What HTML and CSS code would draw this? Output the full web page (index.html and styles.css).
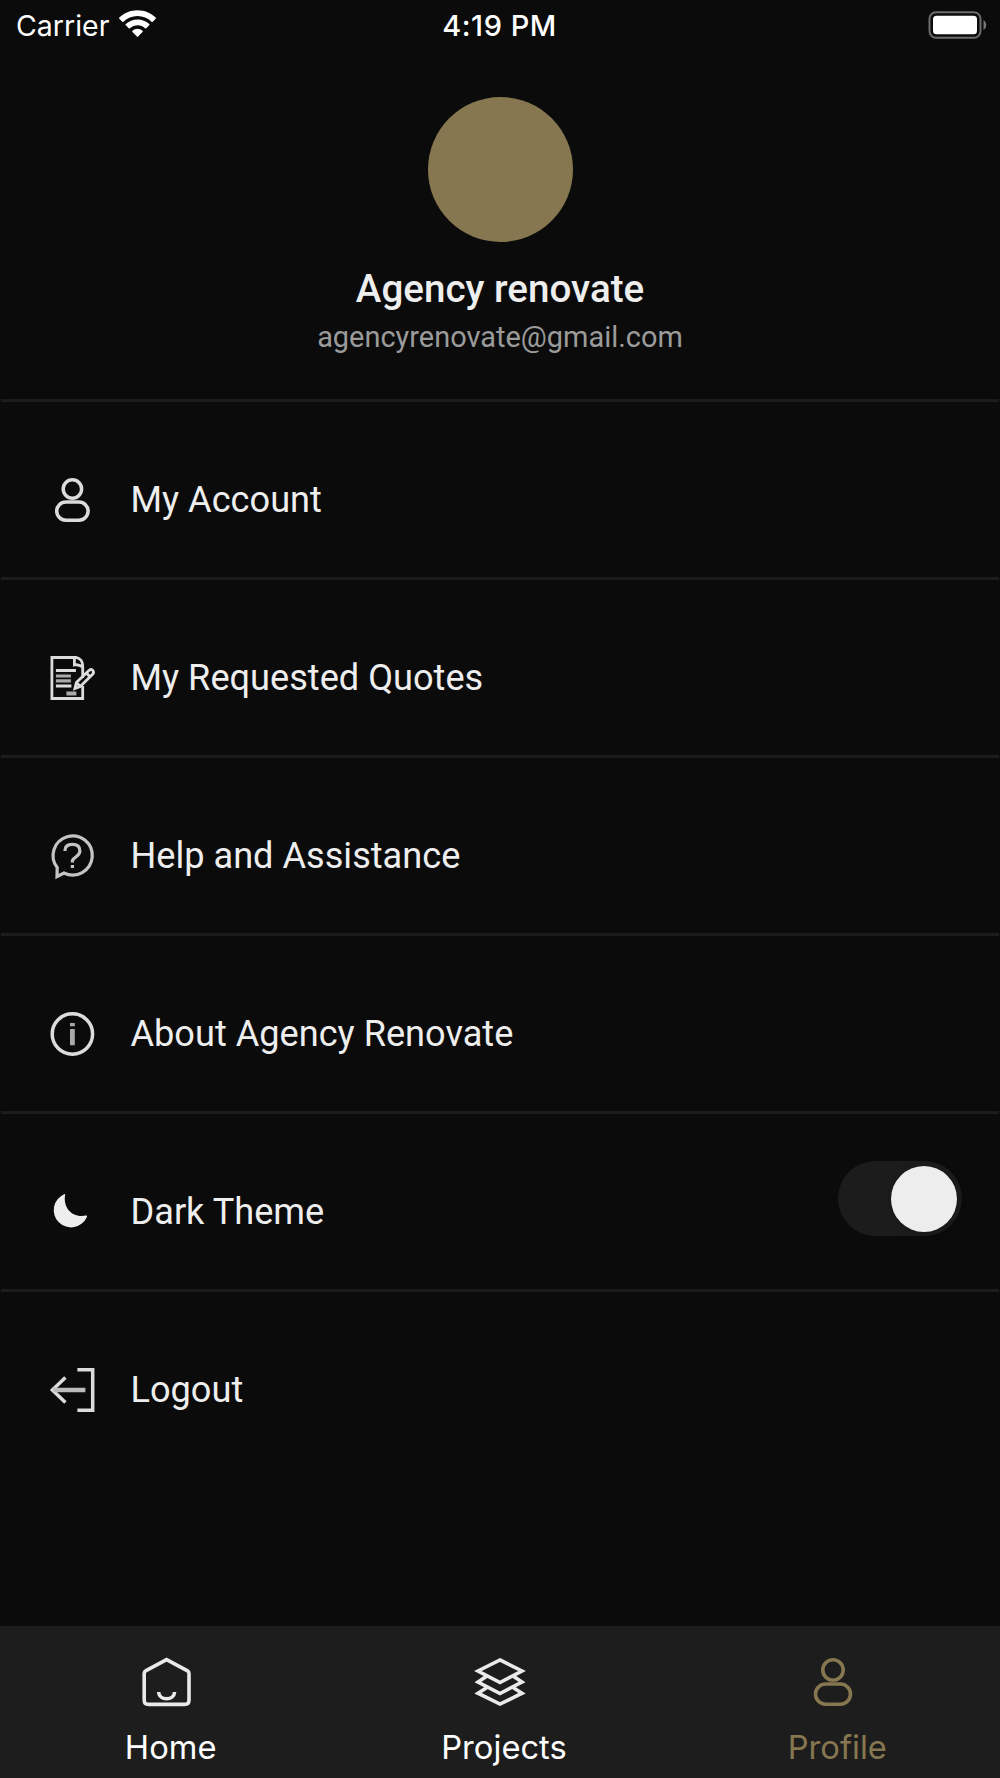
FILE: index.html
```html
<!DOCTYPE html>
<html lang="en">
<head>
<meta charset="utf-8">
<title>Profile</title>
<link rel="stylesheet" href="styles.css">
</head>
<body>
<div class="screen">
  <header class="status">
    <div class="status-left">
      <span class="carrier">Carrier</span>
      <svg class="wifi" viewBox="0 0 36 27" fill="#fff">
        <path d="M18 0C11.1 0 4.9 2.7.3 7.200a.8.800 0 0 0 0 1.100L3.200 11.200a.8.800 0 0 0 1.100 0C7.900 7.700 12.700 5.700 18 5.700s10.100 2 13.700 5.500a.8.800 0 0 0 1.100 0l2.900-2.900a.8.800 0 0 0 0-1.100C31.100 2.700 24.900 0 18 0Z"/>
        <path d="M18 9.100c-4.400 0-8.400 1.700-11.400 4.500a.8.800 0 0 0 0 1.200l2.900 2.900a.8.800 0 0 0 1.100 0A10.700 10.700 0 0 1 18 14.800c2.900 0 5.500 1.100 7.400 2.900a.8.800 0 0 0 1.100 0l2.900-2.900a.8.800 0 0 0 0-1.200A16.600 16.600 0 0 0 18 9.100Z"/>
        <path d="M18 18.200c-1.900 0-3.600.7-4.900 1.900a.8.800 0 0 0 0 1.200l4.300 4.400a.8.800 0 0 0 1.200 0l4.300-4.400a.8.800 0 0 0 0-1.200A7.200 7.200 0 0 0 18 18.200Z"/>
      </svg>
    </div>
    <span class="time">4:19 PM</span>
    <svg class="battery" viewBox="0 0 59 28">
      <rect x="1.500" y="1.200" width="51" height="25.600" rx="6.500" fill="none" stroke="#6c6c6c" stroke-width="2"/>
      <rect x="5" y="4.700" width="44" height="18.600" rx="3.500" fill="#fff"/>
      <path d="M55.500 9c3.600 2 3.600 8 0 10Z" fill="#777"/>
    </svg>
  </header>

  <section class="profile">
    <div class="avatar"></div>
    <h1 class="name">Agency renovate</h1>
    <p class="email">agencyrenovate@gmail.com</p>
  </section>

  <ul class="menu">
    <li class="item">
      <svg class="icon" viewBox="-0.4 0 44 44"><circle cx="22" cy="11" r="9.200"/><rect x="6.300" y="24" width="31.400" height="18.200" rx="9.100"/></svg>
      <span class="label">My Account</span>
    </li>
    <li class="item">
      <svg class="icon fine" viewBox="-0.4 0 44 44"><path d="M32.300 30V42.500H1.500V1.500H26Q32 3 32.300 9.500V22M24 1.500V9Q28 8 32.300 11M5.500 14.500H25.500M5.500 30H21"/><path d="M5.500 20H20.500M5.500 24.800H20.500" stroke="#aaa" stroke-width="3.200"/><path d="M16 37.500H26" stroke="#aaa" stroke-width="4"/><path d="M24.500 32.500 26 26.500 38.500 14.500Q41 12.500 42.500 14.500T42 18.500L29.800 30.500ZM26 26.500 29.800 30.500M36 17 39.500 20.800"/></svg>
      <span class="label">My Requested Quotes</span>
    </li>
    <li class="item">
      <svg class="icon help" viewBox="-0.4 0 44 44"><path d="M6.800 33.500A19.600 19.600 0 1 1 13.500 39L6.600 42.500Z"/><path d="M14.500 17Q14.500 10.300 22 10.300T29.500 17Q29.500 20 26 22.500T22 26.500V28.500M22 31V34"/></svg>
      <span class="label">Help and Assistance</span>
    </li>
    <li class="item">
      <svg class="icon" viewBox="-0.4 0 44 44"><circle cx="22" cy="22" r="20.200"/><path d="M22 16.900V33.300M22 11V14.200" stroke="#aaa" stroke-width="4.800"/></svg>
      <span class="label">About Agency Renovate</span>
    </li>
    <li class="item">
      <svg class="icon" viewBox="-0.4 0 44 44"><path class="solid" d="M13.800 4.200Q14.900 3.700 14.700 5C12.500 17.500 21.500 28.300 35.500 25.600Q37.200 25.300 36.500 27A17.300 17.300 0 1 1 13.800 4.200Z"/></svg>
      <span class="label">Dark Theme</span>
      <span class="toggle"><span class="knob"></span></span>
    </li>
    <li class="item">
      <svg class="icon" viewBox="-0.4 0 44 44"><path d="M27 1.700H42.300V42.300H27"/><path d="M15 9.500 2 22 15 34.500"/><path d="M3 22H35" stroke="#bbb" stroke-width="4.400"/></svg>
      <span class="label">Logout</span>
    </li>
  </ul>

  <nav class="tabs">
    <a class="tab">
      <svg class="tab-icon" viewBox="0.4 0 48 48"><path d="M24 1.600 45 12.800Q46.400 13.500 46.400 15.500V42Q46.400 46.400 42 46.400H6Q1.600 46.400 1.600 42V15.500Q1.600 13.500 3 12.800Z"/><path d="M16 34C16.500 43 31.500 43 32 34"/></svg>
      <span class="tab-label">Home</span>
    </a>
    <a class="tab">
      <svg class="tab-icon" viewBox="0 0 48 48"><path d="M24 1.900 46 13 24 24.500 2 13Z"/><path d="M11 18 2 24 24 35.500 46 24 37 18"/><path d="M11 29.500 2 35.200 24 46.100 46 35.200 37 29.500"/></svg>
      <span class="tab-label">Projects</span>
    </a>
    <a class="tab active">
      <svg class="tab-icon" viewBox="0 0 48 48"><circle cx="24" cy="12" r="10.200"/><rect x="6.500" y="26" width="35" height="20.200" rx="10.100"/></svg>
      <span class="tab-label">Profile</span>
    </a>
  </nav>
</div>
</body>
</html>
```
FILE: styles.css
```css
* { box-sizing: border-box; }

body {
  margin: 0;
  background: #0b0b0b;
  color: #eee;
  font-family: Roboto, sans-serif;
}

.screen {
  width: 1000px;
  height: 1778px;
  display: flex;
  flex-direction: column;
  overflow: hidden;
}

.status {
  height: 50px;
  padding: 0 13px 0 16px;
  display: grid;
  grid-template-columns: 1fr auto 1fr;
  align-items: center;
  color: #fff;
  font-family: Inter, sans-serif;
  font-size: 28.500px;
  line-height: 51px;
}

.status-left { display: flex; align-items: center; gap: 10px; }
.time { font-size: 29px; font-weight: 500; letter-spacing: 0.500px; margin-right: 4px; }
.wifi { width: 37px; height: 28px; margin-top: -4px; }
.battery { width: 59px; height: 28px; margin-top: -1px; justify-self: end; }

.profile {
  height: 349px;
  padding-top: 46.500px;
  display: flex;
  flex-direction: column;
  align-items: center;
}

.avatar {
  width: 145px;
  height: 145px;
  border-radius: 50%;
  background: #867750;
}

.name {
  margin: 22.500px 0 0;
  font-size: 38.600px;
  font-weight: 500;
  line-height: 50px;
}

.email {
  margin: 5px 0 0;
  color: #9b9b9b;
  font-size: 28.950px;
  line-height: 36px;
}

.menu {
  margin: 0 1px;
  padding: 0;
  list-style: none;
  flex: 1;
}

.item {
  height: 178px;
  padding: 21px 37px 0 49px;
  border-top: 3px solid #1c1c1c;
  display: flex;
  align-items: center;
}

.icon {
  width: 44px;
  height: 44px;
  overflow: visible;
  fill: none;
  stroke: #dcdcdc;
  stroke-width: 3.500;
}

.icon.fine { stroke-width: 2.800; }
.icon.help { stroke: #c4c4c4; stroke-width: 3.200; }
.icon .solid { fill: #eee; stroke: none; }

.label {
  margin-left: 36.500px;
  font-size: 36.150px;
  line-height: 44px;
}

.toggle {
  width: 124px;
  height: 75px;
  margin: -27px 0 0 auto;
  padding: 0 5px;
  border-radius: 38px;
  background: #1c1c1c;
  display: flex;
  align-items: center;
  justify-content: flex-end;
}

.knob {
  width: 66px;
  height: 66px;
  border-radius: 50%;
  background: #ededed;
  box-shadow: 0 2px 10px rgba(0, 0, 0, 0.2);
}

.tabs {
  height: 152px;
  padding-top: 32px;
  display: grid;
  grid-template-columns: repeat(3, 1fr);
  background: #1d1d1d;
  color: #fff;
  font-family: Inter, sans-serif;
}

.tab {
  display: flex;
  flex-direction: column;
  align-items: center;
}

.tab-icon {
  width: 48px;
  height: 48px;
  overflow: visible;
  fill: none;
  stroke: #eaeaea;
  stroke-width: 3.600;
}

.tab-label {
  margin-top: 21px;
  padding-left: 8px;
  font-size: 32.700px;
  line-height: 40px;
}

.active { color: #867750; }
.active .tab-icon { stroke: #867750; }
```
